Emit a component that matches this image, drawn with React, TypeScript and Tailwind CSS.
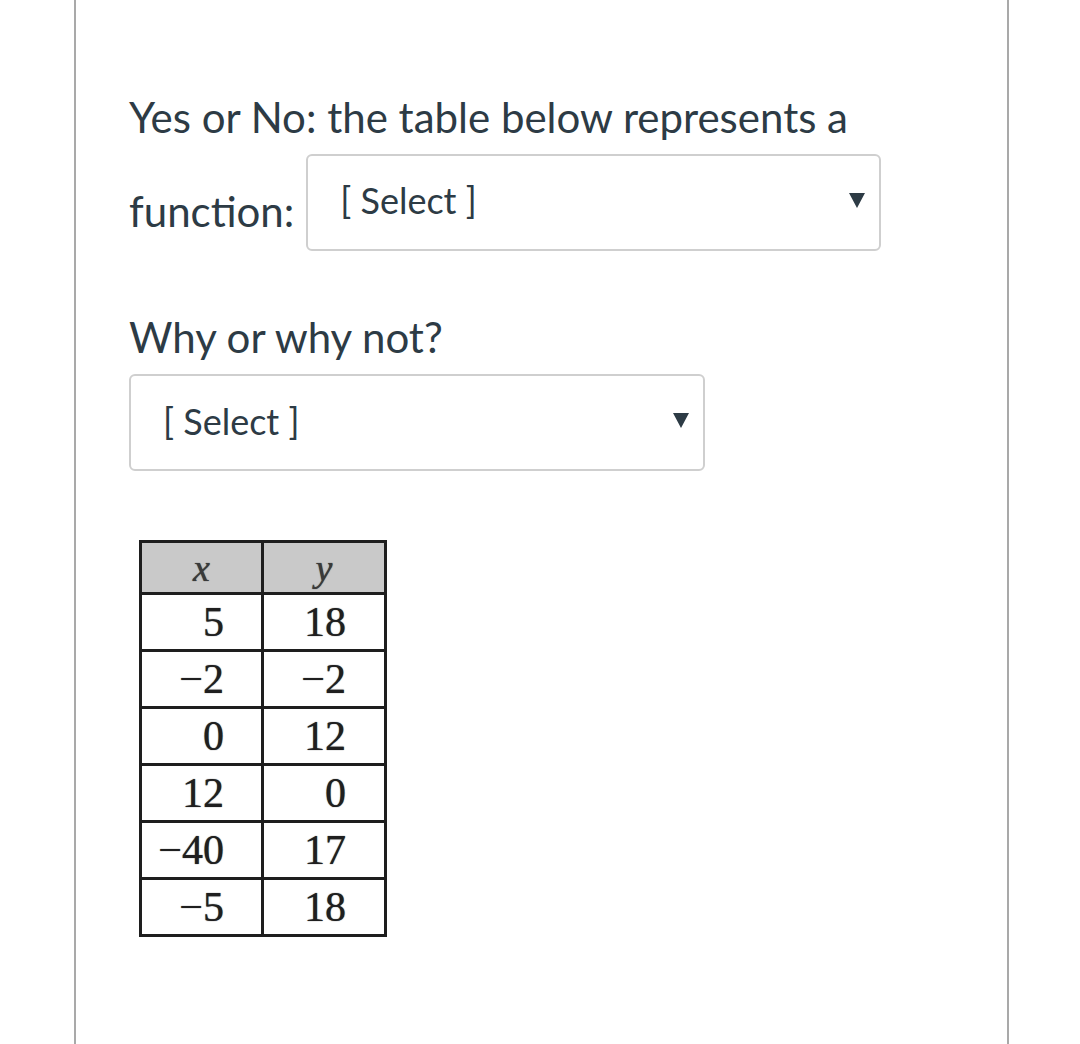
import React from "react";

const rows: [string, string][] = [
  ["5", "18"],
  ["\u22122", "\u22122"],
  ["0", "12"],
  ["12", "0"],
  ["\u221240", "17"],
  ["\u22125", "18"],
];

function Arrow() {
  return (
    <svg width="16" height="15" viewBox="0 0 16 15" className="shrink-0">
      <polygon points="0,0 16,0 8,15" fill="#2d3b45" />
    </svg>
  );
}

function SelectBox({ width, textTop }: { width: number; textTop: string }) {
  return (
    <div
      className="h-[97px] rounded-[6px] border-2 border-[#cfcfcf] bg-white flex items-start justify-between pl-[32px] pr-[14px]"
      style={{ width }}
    >
      <span className={`text-[36px] leading-[36px] text-[#2d3b45] ${textTop}`}>[ Select ]</span>
      <div className="mt-[37px]">
        <Arrow />
      </div>
    </div>
  );
}

export default function App() {
  return (
    <div className="w-[1080px] h-[1044px] bg-white overflow-hidden" style={{ fontFamily: "Lato, 'Open Sans', sans-serif" }}>
      <div className="ml-[74px] w-[935px] h-[1044px] border-l-2 border-r-2 border-[#a9a9a9] pl-[53px] pt-[96px]">
        <div className="text-[42px] leading-[42px] text-[#2d3b45] whitespace-nowrap">
          Yes or No: the table below represents a
        </div>
        <div className="mt-[16px] flex items-start">
          <div className="mt-[36px] text-[42px] leading-[42px] text-[#2d3b45]">function:</div>
          <div className="ml-[12px]">
            <SelectBox width={575} textTop="mt-[26px]" />
          </div>
        </div>
        <div className="mt-[65px] text-[42px] leading-[42px] text-[#2d3b45]">Why or why not?</div>
        <div className="mt-[16px]">
          <SelectBox width={576} textTop="mt-[27px]" />
        </div>
        <div className="mt-[69px] ml-[10px]">
          <table
            className="border-collapse border-[3px] border-[#1e1e1e] text-[#1f1f1f] [text-shadow:0_0_1px_#333]"
            style={{ fontFamily: "'Liberation Serif', 'Times New Roman', serif" }}
          >
            <thead>
              <tr className="h-[52px] bg-[#c9c9c9]">
                <th className="w-[122px] border-[3px] border-[#1e1e1e] text-center italic font-normal text-[38px] leading-none text-[#3a3a3a] p-0">
                  x
                </th>
                <th className="w-[123px] border-[3px] border-[#1e1e1e] text-center italic font-normal text-[38px] leading-none text-[#3a3a3a] p-0">
                  y
                </th>
              </tr>
            </thead>
            <tbody>
              {rows.map(([a, b], i) => (
                <tr key={i} className="h-[57px]">
                  <td className="border-[3px] border-[#1e1e1e] text-right pr-[37px] p-0 text-[42px] leading-none">{a}</td>
                  <td className="border-[3px] border-[#1e1e1e] text-right pr-[38px] p-0 text-[42px] leading-none">{b}</td>
                </tr>
              ))}
            </tbody>
          </table>
        </div>
      </div>
    </div>
  );
}
